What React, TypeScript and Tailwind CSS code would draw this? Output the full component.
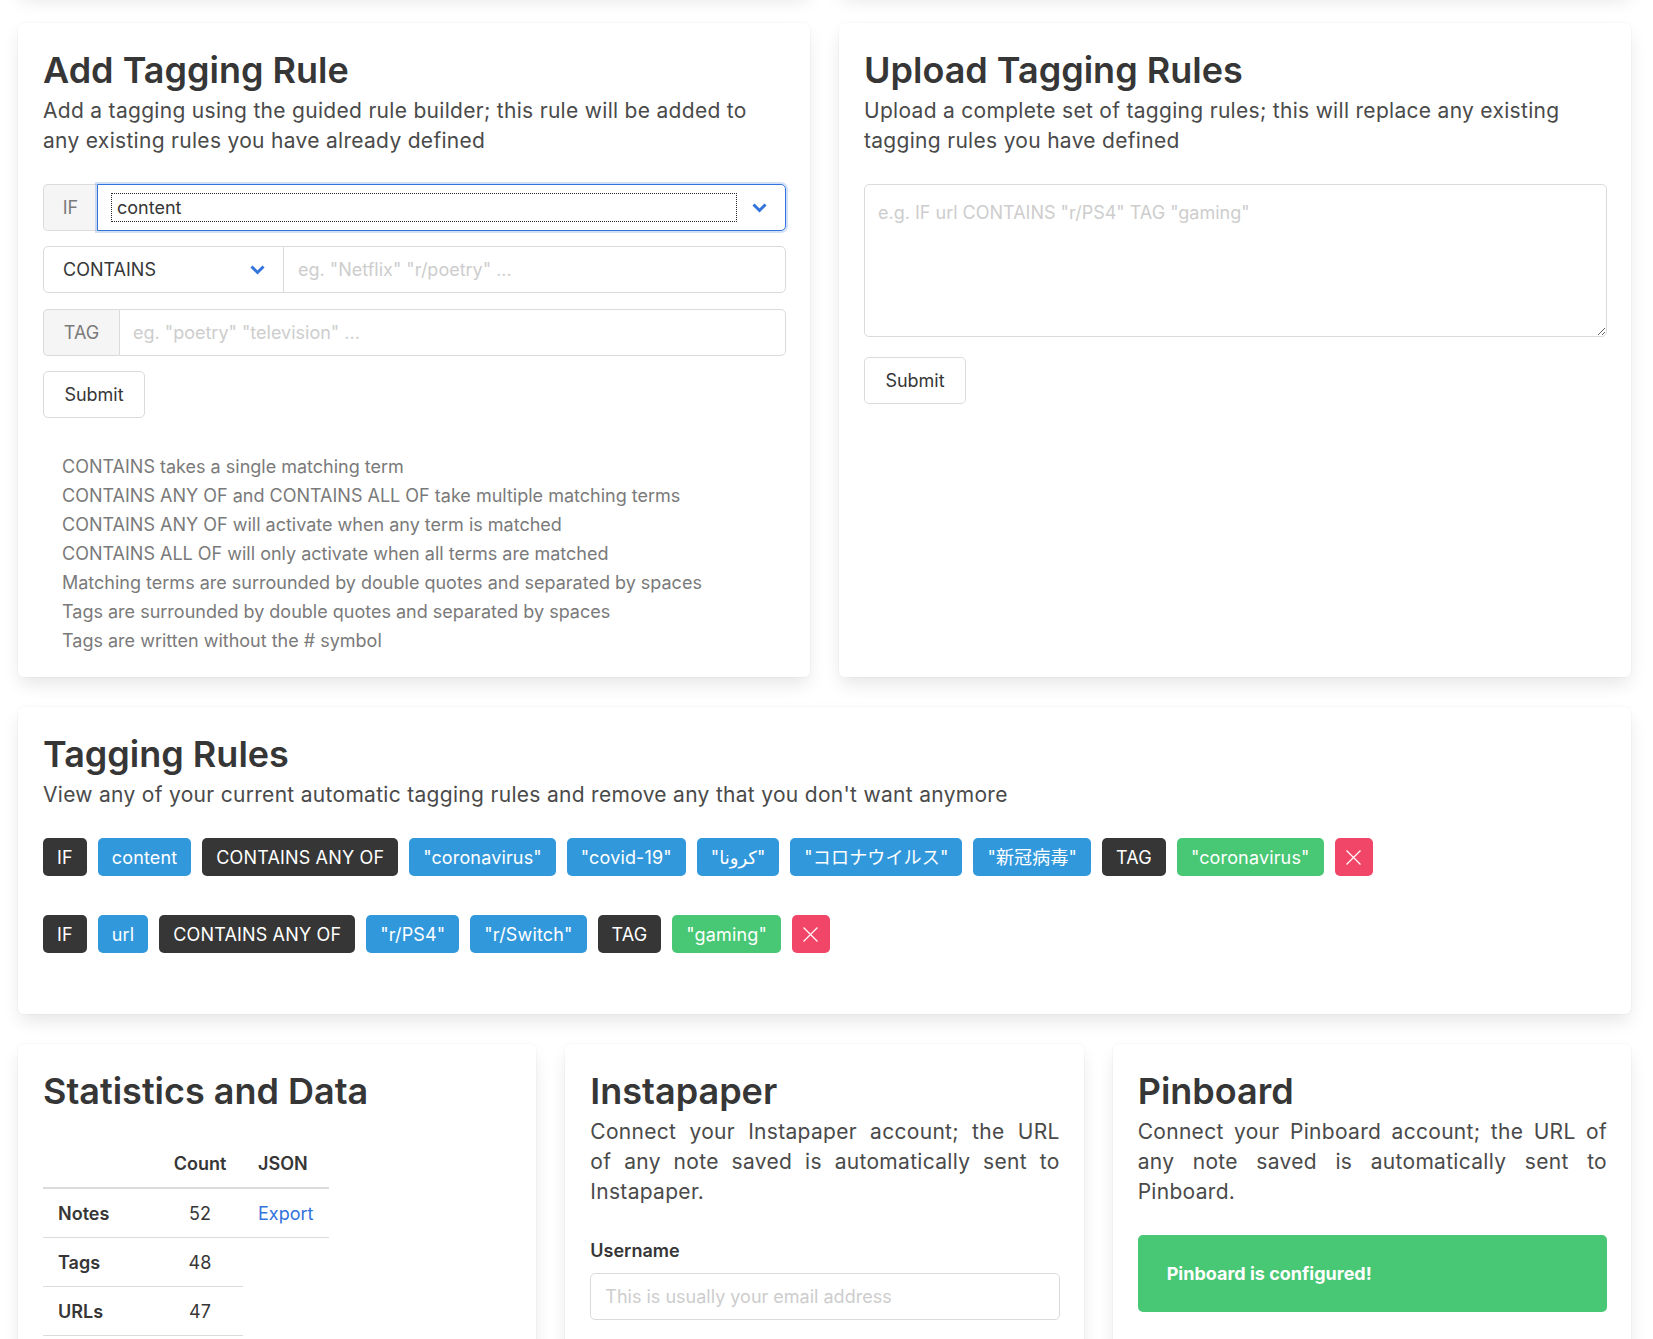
import React from 'react';

const box =
  'rounded-[6px] bg-white shadow-[0_9px_18px_-2px_rgba(10,10,10,0.1),0_0_0_1px_rgba(10,10,10,0.02)]';

const title = 'text-[36px] leading-[40px] font-semibold text-[#363636]';
const subtitle = 'mt-[6px] text-[21px] leading-[30px] tracking-[0.3px] text-[#4a4a4a]';

function Chevron() {
  return (
    <svg width="15" height="10" viewBox="0 0 15 10" className="shrink-0">
      <polyline points="1.5,1.5 7.5,7.5 13.5,1.5" fill="none" stroke="#3273dc" strokeWidth="3" strokeLinejoin="miter" />
    </svg>
  );
}

type TagColor = 'dark' | 'info' | 'success';

const tagColors: Record<TagColor, string> = {
  dark: 'bg-[#363636]',
  info: 'bg-[#3298dc]',
  success: 'bg-[#48c774]',
};

function Tag({ color, children }: { color: TagColor; children: React.ReactNode }) {
  return (
    <span
      className={`inline-flex h-[38px] items-center rounded-[5px] px-[14px] text-[18px] leading-[27px] tracking-[0.15px] text-white whitespace-nowrap ${tagColors[color]}`}
    >
      {children}
    </span>
  );
}

function DeleteTag() {
  return (
    <button className="inline-flex h-[38px] w-[38px] items-center justify-center rounded-[5px] bg-[#f14668]">
      <svg width="15" height="15" viewBox="0 0 15 15">
        <path d="M0.5 0.5L14.5 14.5M14.5 0.5L0.5 14.5" stroke="white" strokeWidth="1.2" />
      </svg>
    </button>
  );
}

interface Rule {
  field: string;
  terms: string[];
  tags: string[];
}

const rules: Rule[] = [
  {
    field: 'content',
    terms: ['"coronavirus"', '"covid-19"', '"كرونا"', '"コロナウイルス"', '"新冠病毒"'],
    tags: ['"coronavirus"'],
  },
  {
    field: 'url',
    terms: ['"r/PS4"', '"r/Switch"'],
    tags: ['"gaming"'],
  },
];

const helpLines = [
  'CONTAINS takes a single matching term',
  'CONTAINS ANY OF and CONTAINS ALL OF take multiple matching terms',
  'CONTAINS ANY OF will activate when any term is matched',
  'CONTAINS ALL OF will only activate when all terms are matched',
  'Matching terms are surrounded by double quotes and separated by spaces',
  'Tags are surrounded by double quotes and separated by spaces',
  'Tags are written without the # symbol',
];

// justified blurb, broken where the original page breaks it
function Blurb({ lines }: { lines: string[] }) {
  return (
    <p className={subtitle}>
      {lines.map((line, i) => (
        <span
          key={line}
          className={i < lines.length - 1 ? 'block whitespace-nowrap text-justify [text-align-last:justify]' : 'block'}
        >
          {line}
        </span>
      ))}
    </p>
  );
}

function SubmitButton({ className = '' }: { className?: string }) {
  return (
    <button
      className={`h-[47px] w-[102px] rounded-[5px] border border-[#dbdbdb] bg-white text-[18px] text-[#363636] ${className}`}
    >
      Submit
    </button>
  );
}

function AddRuleCard() {
  return (
    <div className={`${box} pt-[27px] pl-[25px] pr-[24px] pb-[22px]`}>
      <h1 className={title}>Add Tagging Rule</h1>
      <p className={subtitle}>
        Add a tagging using the guided rule builder; this rule will be added to any existing rules you have already
        defined
      </p>

      <div className="mt-[28px] flex h-[47px]">
        <div className="flex w-[54px] items-center justify-center rounded-l-[5px] border border-r-0 border-[#dbdbdb] bg-[#f5f5f5] text-[18px] text-[#7a7a7a]">
          IF
        </div>
        <div className="flex flex-1 items-center rounded-r-[5px] border border-[#3273dc] shadow-[0_0_0_2px_rgba(50,115,220,0.22)]">
          <div className="ml-[13px] flex h-[29px] w-[626px] items-center border border-dotted border-[#222] pl-[5px] text-[18px] text-[#363636]">
            content
          </div>
          <div className="flex flex-1 justify-center pr-[3px]">
            <Chevron />
          </div>
        </div>
      </div>

      <div className="mt-[15px] flex h-[47px]">
        <div className="flex w-[241px] items-center justify-between rounded-l-[5px] border border-[#dbdbdb] pl-[19px] pr-[18px] text-[18px] text-[#363636]">
          CONTAINS
          <Chevron />
        </div>
        <input
          className="-ml-px min-w-0 flex-1 rounded-r-[5px] border border-[#dbdbdb] px-[14px] text-[18px] text-[#363636] outline-none placeholder:text-[#cdcdcd]"
          placeholder={'eg. "Netflix" "r/poetry" ...'}
        />
      </div>

      <div className="mt-[16px] flex h-[47px]">
        <div className="flex w-[76px] items-center justify-center rounded-l-[5px] border border-r-0 border-[#dbdbdb] bg-[#f5f5f5] text-[18px] text-[#7a7a7a]">
          TAG
        </div>
        <input
          className="min-w-0 flex-1 rounded-r-[5px] border border-[#dbdbdb] px-[13px] text-[18px] text-[#363636] outline-none placeholder:text-[#cdcdcd]"
          placeholder={'eg. "poetry" "television" ...'}
        />
      </div>

      <SubmitButton className="mt-[15px]" />

      <ul className="mt-[34px] pl-[19px] text-[18px] leading-[29px] text-[#7a7a7a]">
        {helpLines.map((line) => (
          <li key={line}>{line}</li>
        ))}
      </ul>
    </div>
  );
}

function UploadCard() {
  return (
    <div className={`${box} pt-[27px] pl-[25px] pr-[24px] pb-[22px]`}>
      <h1 className={title}>Upload Tagging Rules</h1>
      <p className={subtitle}>
        Upload a complete set of tagging rules; this will replace any existing tagging rules you have defined
      </p>
      <textarea
        className="mt-[28px] block h-[153px] w-full resize-y rounded-[5px] border border-[#dbdbdb] px-[13px] pt-[14px] text-[18px] leading-[27px] text-[#363636] outline-none placeholder:text-[#cdcdcd]"
        placeholder={'e.g. IF url CONTAINS "r/PS4" TAG "gaming"'}
      />
      <SubmitButton className="mt-[20px]" />
    </div>
  );
}

function TaggingRulesCard() {
  return (
    <div className={`${box} pt-[27px] pl-[25px] pr-[24px] pb-[22px]`}>
      <h1 className={title}>Tagging Rules</h1>
      <p className={subtitle}>
        View any of your current automatic tagging rules and remove any that you don't want anymore
      </p>
      <div className="mt-[28px]">
        {rules.map((rule) => (
          <div key={rule.field} className="mb-[39px] flex flex-wrap gap-[11px]">
            <Tag color="dark">IF</Tag>
            <Tag color="info">{rule.field}</Tag>
            <Tag color="dark">CONTAINS ANY OF</Tag>
            {rule.terms.map((t) => (
              <Tag key={t} color="info">
                {t}
              </Tag>
            ))}
            <Tag color="dark">TAG</Tag>
            {rule.tags.map((t) => (
              <Tag key={t} color="success">
                {t}
              </Tag>
            ))}
            <DeleteTag />
          </div>
        ))}
      </div>
    </div>
  );
}

function StatsCard() {
  const th = 'h-[49px] border-b-2 border-[#dbdbdb] text-[18px] font-semibold text-[#363636]';
  const td = 'h-[49px] border-b border-[#dbdbdb] text-[18px] text-[#363636]';
  return (
    <div className={`${box} pt-[27px] pl-[25px] pr-[24px] pb-[22px]`}>
      <h1 className={title}>Statistics and Data</h1>
      <table className="mt-[29px] w-[286px] border-separate border-spacing-0">
        <thead>
          <tr>
            <th className={`${th} w-[114px]`}></th>
            <th className={`${th} w-[86px] text-center`}>Count</th>
            <th className={`${th} pl-[15px] text-left`}>JSON</th>
          </tr>
        </thead>
        <tbody>
          <tr>
            <td className={`${td} pl-[15px] font-semibold`}>Notes</td>
            <td className={`${td} text-center`}>52</td>
            <td className={`${td} pl-[15px]`}>
              <a className="text-[#3273dc]">Export</a>
            </td>
          </tr>
          <tr>
            <td className={`${td} pl-[15px] font-semibold`}>Tags</td>
            <td className={`${td} text-center`}>48</td>
          </tr>
          <tr>
            <td className={`${td} pl-[15px] font-semibold`}>URLs</td>
            <td className={`${td} text-center`}>47</td>
          </tr>
        </tbody>
      </table>
    </div>
  );
}

function InstapaperCard() {
  return (
    <div className={`${box} pt-[27px] pl-[25px] pr-[24px] pb-[22px]`}>
      <h1 className={title}>Instapaper</h1>
      <Blurb
        lines={[
          'Connect your Instapaper account; the URL',
          'of any note saved is automatically sent to',
          'Instapaper.',
        ]}
      />
      <label className="mt-[30px] block text-[18px] leading-[27px] font-semibold text-[#363636]">Username</label>
      <input
        className="mt-[9px] block h-[47px] w-full rounded-[5px] border border-[#dbdbdb] px-[14px] text-[18px] outline-none placeholder:text-[#cdcdcd]"
        placeholder="This is usually your email address"
      />
    </div>
  );
}

function PinboardCard() {
  return (
    <div className={`${box} pt-[27px] pl-[25px] pr-[24px] pb-[22px]`}>
      <h1 className={title}>Pinboard</h1>
      <Blurb
        lines={['Connect your Pinboard account; the URL of', 'any note saved is automatically sent to', 'Pinboard.']}
      />
      <div className="mt-[28px] rounded-[5px] bg-[#48c774] py-[25px] pl-[29px] pr-[40px] text-[18px] leading-[27px] font-bold text-white">
        Pinboard is configured!
      </div>
    </div>
  );
}

export default function App() {
  return (
    <div className="h-[1339px] overflow-hidden bg-white font-['Inter','Noto_Sans_CJK_JP','DejaVu_Sans',sans-serif] text-[#4a4a4a]">
      <div className="-mt-[107px] flex flex-col gap-[30px] pl-[18px] pr-[22px]">
        <div className="grid grid-cols-2 gap-[29px]">
          <div className={`${box} h-[100px]`} />
          <div className={`${box} h-[100px]`} />
        </div>
        <div className="grid grid-cols-2 gap-[29px]">
          <AddRuleCard />
          <UploadCard />
        </div>
        <TaggingRulesCard />
        <div className="grid grid-cols-3 gap-[29px]">
          <StatsCard />
          <InstapaperCard />
          <PinboardCard />
        </div>
      </div>
    </div>
  );
}
